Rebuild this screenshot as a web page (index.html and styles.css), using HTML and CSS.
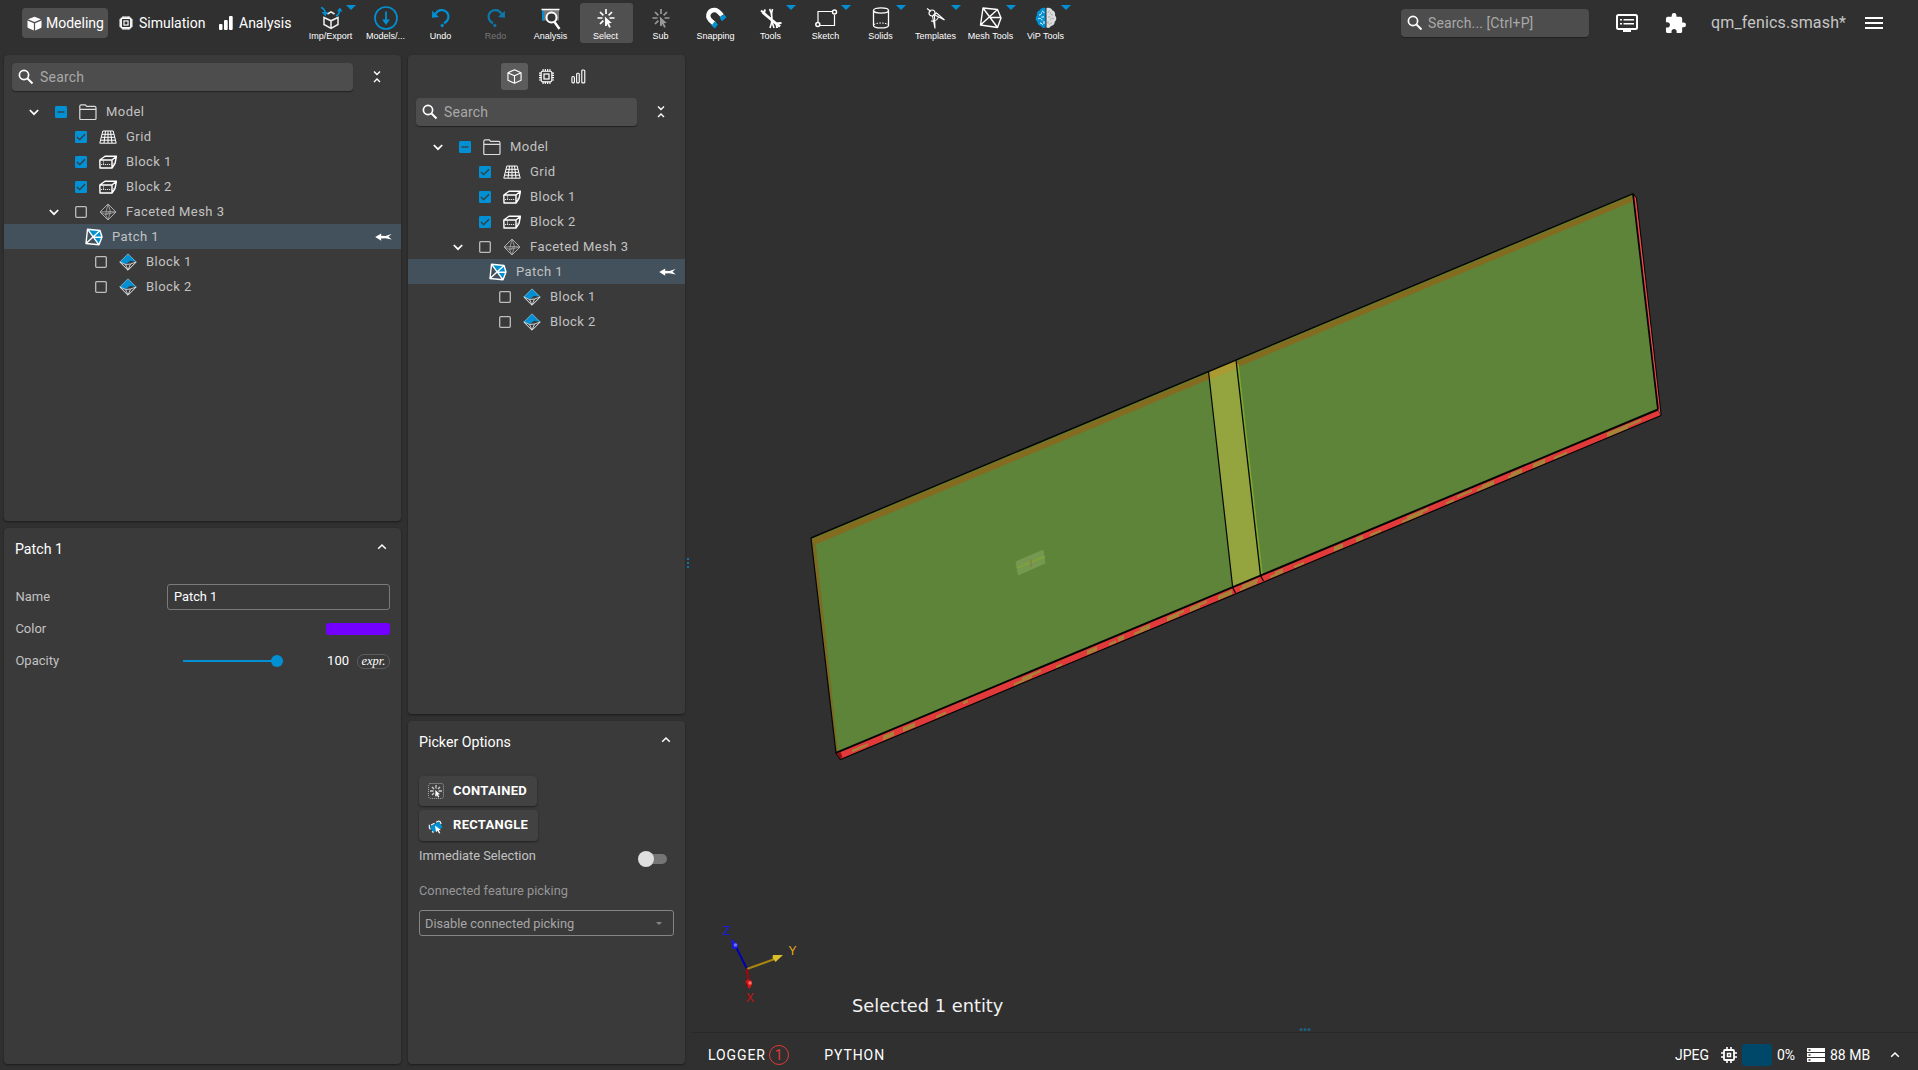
FILE: index.html
```html
<!DOCTYPE html>
<html lang="en">
<head>
<meta charset="utf-8">
<title>qm_fenics.smash*</title>
<link rel="stylesheet" href="styles.css">
</head>
<body>
<svg class="defs" aria-hidden="true">
  <symbol id="i-cube-solid" viewBox="0 0 24 24"><path d="M11 1.400 1.600 5 11 9.200c.6.3 1.400.3 2 0L22.400 5 13 1.400c-.6-.3-1.400-.3-2 0zM.8 7v10.500c0 .7.3 1.200 1 1.600L11 23.300V11.400zM23.200 7v10.500c0 .7-.3 1.200-1 1.600L13 23.300V11.400z" fill="#fff"/></symbol>
  <symbol id="i-chip" viewBox="0 0 24 24"><g fill="none" stroke="#fff"><rect x="3.500" y="3.500" width="17" height="17" rx="2.500" stroke-width="3"/><rect x="8.500" y="8.500" width="7" height="7" stroke-width="2"/><path d="M7 0v4m3.400-4v4m3.400-4v4M17 0v4M7 20v4m3.400-4v4m3.400-4v4M17 20v4M0 7h4m-4 3.400h4m-4 3.400h4M0 17h4M20 7h4m-4 3.400h4m-4 3.400h4M20 17h4" stroke-width="1.800"/></g></symbol>
  <symbol id="i-chip-line" viewBox="0 0 24 24"><g fill="none" stroke="#fff"><rect x="3.500" y="3.500" width="17" height="17" rx="2.500" stroke-width="1.800"/><rect x="8" y="8" width="8" height="8" stroke-width="2"/><path d="M6.500 0v3.500m3.600-3.500v3.500m3.700-3.500v3.500M17.500 0v3.500M6.500 20.500V24m3.600-3.500V24m3.700-3.500V24m3.700-3.500V24M0 6.500h3.500M0 10.100h3.500M0 13.800h3.500M0 17.500h3.500M20.500 6.500H24m-3.500 3.600H24m-3.500 3.700H24m-3.500 3.700H24" stroke-width="1.800"/></g></symbol>
  <symbol id="i-bars" viewBox="0 0 14 14"><g fill="#fff"><rect x="0" y="8" width="3.500" height="6" rx="1"/><rect x="5" y="4" width="3.700" height="10" rx="1"/><rect x="10" y="0" width="3.700" height="14" rx="1"/></g></symbol>
  <symbol id="i-bars-line" viewBox="0 0 16 16"><g fill="none" stroke="#fff" stroke-width="1.200"><rect x="1" y="8" width="2.600" height="6.800" rx="1"/><rect x="6" y="4.500" width="2.800" height="10.300" rx="1"/><rect x="11.500" y="1" width="3.200" height="13.800" rx="1"/></g></symbol>
  <symbol id="i-cube-line" viewBox="0 0 16 16"><path d="M8 .8 15 4v8L8 15.300 1 12V4zM1 4l7 3.300L15 4M8 7.300v8" fill="none" stroke="#fff" stroke-width="1.200" stroke-linejoin="round"/></symbol>
  <symbol id="i-search" viewBox="0 0 16 16"><g fill="none" stroke="#fff" stroke-width="1.700"><circle cx="6" cy="6" r="4.600"/><path d="m9.500 9.500 5 5" stroke-width="2"/></g></symbol>
  <symbol id="i-collapse" viewBox="0 0 8 14"><path d="m1 1.500 3 3 3-3M1 12l3-3 3 3" fill="none" stroke="#fff" stroke-width="1.400"/></symbol>
  <symbol id="i-down" viewBox="0 0 10 10"><path d="m.8 3 4.200 4.200L9.200 3" fill="none" stroke="#fff" stroke-width="1.700"/></symbol>
  <symbol id="i-up" viewBox="0 0 10 10"><path d="m1.200 6.800 3.800-3.800 3.800 3.800" fill="none" stroke="#fff" stroke-width="1.500"/></symbol>
  <symbol id="i-partial" viewBox="0 0 12 12"><rect width="12" height="12" rx="1.300" fill="#0090d3"/><path d="M2.500 6h7" stroke="#3a3a3a" stroke-width="1.300"/></symbol>
  <symbol id="i-checked" viewBox="0 0 12 12"><rect width="12" height="12" rx="1.300" fill="#0090d3"/><path d="m2 6 2.700 2.700L10 3.300" fill="none" stroke="#3a3a3a" stroke-width="1.300"/></symbol>
  <symbol id="i-unchecked" viewBox="0 0 12 12"><rect x=".7" y=".7" width="10.600" height="10.600" rx="1" fill="none" stroke="#bdbdbd" stroke-width="1.300"/></symbol>
  <symbol id="i-folder" viewBox="0 0 18 18"><path d="M.8 15.500V3.300c0-1 .5-1.500 1.500-1.500h4l1.400 1.500H15.500c1 0 1.500.5 1.500 1.500v10.700c0 .6-.4 1-1 1H1.800c-.6 0-1-.4-1-1zM.8 6.300H17" fill="none" stroke="#ddd" stroke-width="1.200"/></symbol>
  <symbol id="i-grid" viewBox="0 0 18 18"><path d="M3.800 3h10.400l3 12.200H.8zM3 6.300h12M2.200 9.300h13.600M1.400 12.200h15.200M6.500 3 5 15M9 3v12M11.500 3 13 15" fill="none" stroke="#fff" stroke-width="1"/></symbol>
  <symbol id="i-block" viewBox="0 0 18 18"><path d="M.8 7 6 3.300h11.500L16 10.500 13 15H1zM.8 7H13v8M13 7l4.500-3.700" fill="none" stroke="#fff" stroke-width="1.400" stroke-linejoin="round"/><path d="M2 11.500h10.500M4.500 7.500v4M13.500 11l2.500-1" fill="none" stroke="#ddd" stroke-width="1" stroke-dasharray="1.200 .8"/></symbol>
  <symbol id="i-mesh" viewBox="0 0 18 18"><path d="M9 1 17 9 9 17 1 9z" fill="none" stroke="#bbb" stroke-width=".9"/><path d="M9 1 6.500 11.500 9 17 11.500 8.500zM1 9l5.500 2.500L17 9M1 9l10.500-.5L17 9M6.500 11.500l5-3" fill="none" stroke="#aaa" stroke-width=".8"/></symbol>
  <symbol id="i-mesh-blue" viewBox="0 0 18 18"><path d="M9 .8 17.200 9l-6-1.200-4.500 3.500L.8 9z" fill="#0090d3"/><path d="M9 .8 17.200 9 9 17.200.8 9z" fill="none" stroke="#9ec4d4" stroke-width=".7"/><path d="m.8 9 5.700 2.500L9 17l2.500-6L17.200 9M.8 9 9 17.200 17.200 9M6.500 11.500l5-.5" fill="none" stroke="#ddd" stroke-width=".9"/></symbol>
  <symbol id="i-patch" viewBox="0 0 18 18"><path d="M2.500 1.200 15 2.500 8.500 9.500zM15 2.500 17 9l-3 7.500-5.500-7z" fill="#0090d3"/><path d="M2.500 1.200 15 2.500 17 9l-3 7.800L1 15.500zM2.500 1.200 14 16.800M15 2.500 1 15.500M8.500 9.300H17" fill="none" stroke="#fff" stroke-width="1.400" stroke-linejoin="round"/></symbol>
  <symbol id="i-pin" viewBox="0 0 17 10"><path d="M.2 5 6.300 1.500 6 3.700l4.500.2L16.500 2 13.500 4.800l3.300 2.700-6.500-1.200-4.300.2.300 2.300z" fill="#fff"/></symbol>
  <symbol id="i-impexp" viewBox="0 0 24 24"><path d="M8.500 8 12 5.800 15.500 8M5 11.500v7l7 4 7-4v-7l-7 3.300zM12 14.800v7.700" fill="none" stroke="#eee" stroke-width="1.500"/><path d="M2 1.500c3 .8 4 2.500 4.300 5.500M17 10c2.500-1 3.500-3 3.500-6" fill="none" stroke="#0090d3" stroke-width="1.700"/><path d="M2.500 6h6.300L6.500 10.300zM18 5.300l3-3.800 2.500 4z" fill="#0090d3"/></symbol>
  <symbol id="i-models" viewBox="0 0 24 24"><circle cx="12" cy="12" r="11" fill="none" stroke="#0090d3" stroke-width="1.700"/><path d="M11.100 5.500h1.800v8h3L12 19l-3.900-5.500h3z" fill="#0090d3"/></symbol>
  <symbol id="i-undo" viewBox="0 0 24 24"><path d="M6.500 8C9 3.500 14 3.200 17 5.500c4 3.500 2.800 9.500-2 11.800" fill="none" stroke="#0090d3" stroke-width="2.200"/><path d="m3.200 4.700-.2 7 7-.7zM13.200 17.500l2 2-2 2-2-2z" fill="#0090d3"/></symbol>
  <symbol id="i-analysis" viewBox="0 0 24 24"><path d="M3 3.500h17v11H3z" fill="#777"/><path d="M3 4.500h2v10H3z" fill="#0090d3"/><path d="M2.500 3.500h18" stroke="#fff" stroke-width="1.500"/><circle cx="12.500" cy="11.500" r="5" fill="#333" stroke="#fff" stroke-width="2"/><path d="m15.500 16 5 7" stroke="#fff" stroke-width="2.400"/></symbol>
  <symbol id="i-select" viewBox="0 0 24 24"><path d="M12 3v5M12 16v4M3.500 12h5M15.500 12h5M6 6l3.400 3.400M18 6l-3.400 3.400M6 18l3.400-3.400" stroke="currentColor" stroke-width="1.700"/><path d="m10.800 10.500 7 6.500-3 .2 2 3.800-1.700.8-1.800-3.800-2 2z" fill="currentColor"/></symbol>
  <symbol id="i-snap" viewBox="0 0 24 24"><path d="M10.500 18 6.500 14.500C1.500 9 6 3.700 11 4c3 .3 5 3 7 5.500" fill="none" stroke="#fff" stroke-width="4.400"/><path d="m10.500 15.500 3.500 2.800L11 22.500 7.500 19.800zM17.500 9.500l3-.7 2 2.400-4.500 4-2.200-3z" fill="#0090d3"/></symbol>
  <symbol id="i-tools" viewBox="0 0 24 24"><path d="m3.500 6 4.500 4L17 17.500l4 3" stroke="#fff" stroke-width="2.800"/><path d="M2 4.500 5 7l1-3.500M18 22l-.5-4.500 5-.5" fill="none" stroke="#fff" stroke-width="2"/><path d="M10.500 3c3 5 3.500 11 .5 19M13.500 3c-2 5-.5 14 1.500 19" fill="none" stroke="#fff" stroke-width="1.600"/></symbol>
  <symbol id="i-sketch" viewBox="0 0 24 24"><path d="M4 16.500V5.500h14M20.500 9v10.500H6" fill="none" stroke="#fff" stroke-width="1.200"/><circle cx="20.500" cy="6" r="2" fill="none" stroke="#fff" stroke-width="1.500"/><circle cx="3.800" cy="18.500" r="2" fill="none" stroke="#fff" stroke-width="1.500"/></symbol>
  <symbol id="i-solid" viewBox="0 0 24 24"><path d="M4.500 4.500v15c0 3.300 15 3.300 15 0v-15" fill="none" stroke="#fff" stroke-width="1.300"/><ellipse cx="12" cy="4.500" rx="7.500" ry="2.600" fill="none" stroke="#fff" stroke-width="1.300"/><path d="M5 18.500c3-2 11-2 14 0" fill="none" stroke="#fff" stroke-dasharray="1.500 1.300"/></symbol>
  <symbol id="i-templates" viewBox="0 0 24 24"><circle cx="8" cy="7" r="3" fill="none" stroke="#fff" stroke-width="1.200"/><path d="m3 2.500 4 3M10 8.500l10.500 5.500-8-7zM8.500 10l2.500 12.500L10.500 10M14.500 10.500C14 13.500 11 15.500 7 15" fill="none" stroke="#fff" stroke-width="1.100"/></symbol>
  <symbol id="i-meshtools" viewBox="0 0 24 24"><path d="m4 2 14.500 1.500L22 12l-3.500 9.500L1.500 19zM4 2l14.500 19.500M18.500 3.500 1.500 19M11 11.500h11" fill="none" stroke="#fff" stroke-width="1.400" stroke-linejoin="round"/></symbol>
  <symbol id="i-brain" viewBox="0 0 24 24"><path d="M11.500 2C8 1 6 3 5.500 4.500 3 5 2.500 8 3 9.500c-2 2-1.500 5 .3 6.200 0 2.500 1.700 4 3.700 4.300C8 22 10 22.500 11.500 21.500z" fill="#0090d3"/><path d="M12.500 2c3.500-1 5.500 1 6 2.500 2.500.5 3 3.500 2.500 5 2 2 1.500 5-.3 6.200 0 2.500-1.700 4-3.700 4.300-1 2-3 2.500-4.500 1.500z" fill="#ddd"/><path d="M5 9c2 0 2.500-1 2.500-2.500M8 5c1 0 2 1 2 2M4 13c2-1.500 4 0 4 1.500M7.500 11H10M6 17c1.500 0 2.500 1 2.500 2M10 15v3" stroke="#fff" fill="none"/><path d="M19 9c-2 0-2.500-1-2.500-2.500M16 5c-1 0-2 1-2 2M20 13c-2-1.500-4 0-4 1.500M16.500 11H14M18 17c-1.500 0-2.500 1-2.500 2M14 15v3" stroke="#aaa" fill="none"/></symbol>
</svg>

<header class="topbar">
  <nav class="modes">
    <div class="mode mode-modeling active"><svg width="15" height="15"><use href="#i-cube-solid"/></svg><span>Modeling</span></div>
    <div class="mode mode-simulation"><svg width="14" height="14"><use href="#i-chip"/></svg><span>Simulation</span></div>
    <div class="mode"><svg width="14" height="14"><use href="#i-bars"/></svg><span>Analysis</span></div>
  </nav>
  <div class="tools">
    <div class="tool has-menu"><svg><use href="#i-impexp"/></svg><span>Imp/Export</span></div>
    <div class="tool"><svg><use href="#i-models"/></svg><span>Models/...</span></div>
    <div class="tool"><svg><use href="#i-undo"/></svg><span>Undo</span></div>
    <div class="tool disabled"><svg class="flip"><use href="#i-undo"/></svg><span>Redo</span></div>
    <div class="tool"><svg><use href="#i-analysis"/></svg><span>Analysis</span></div>
    <div class="tool active"><svg><use href="#i-select"/></svg><span>Select</span></div>
    <div class="tool"><svg class="dim"><use href="#i-select"/></svg><span>Sub</span></div>
    <div class="tool"><svg><use href="#i-snap"/></svg><span>Snapping</span></div>
    <div class="tool has-menu"><svg><use href="#i-tools"/></svg><span>Tools</span></div>
    <div class="tool has-menu"><svg><use href="#i-sketch"/></svg><span>Sketch</span></div>
    <div class="tool has-menu"><svg><use href="#i-solid"/></svg><span>Solids</span></div>
    <div class="tool has-menu"><svg><use href="#i-templates"/></svg><span>Templates</span></div>
    <div class="tool has-menu"><svg><use href="#i-meshtools"/></svg><span>Mesh Tools</span></div>
    <div class="tool has-menu"><svg><use href="#i-brain"/></svg><span>ViP Tools</span></div>
  </div>
  <div class="top-right">
    <div class="search search-top"><svg><use href="#i-search"/></svg><span>Search... [Ctrl+P]</span></div>
    <svg class="messages" width="22" height="18" viewBox="0 0 22 18"><rect x="1" y="1" width="20" height="14" rx="1.500" fill="none" stroke="#fff" stroke-width="2"/><path d="M7 16h8v2H7zM4 5h2v1.600H4zM4 9h2v1.600H4zM7.500 5H18v1.600H7.500zM7.500 9H18v1.600H7.500z" fill="#fff"/></svg>
    <svg class="plugins" width="21" height="21" viewBox="1 1 22 22"><path d="M20.500 11H19V7a2 2 0 0 0-2-2h-4V3.500a2.500 2.500 0 0 0-5 0V5H4a2 2 0 0 0-2 2v3.800h1.500c1.500 0 2.700 1.200 2.700 2.700S5 16.200 3.500 16.200H2V20a2 2 0 0 0 2 2h3.800v-1.500c0-1.500 1.200-2.700 2.700-2.700s2.700 1.200 2.700 2.700V22H17a2 2 0 0 0 2-2v-4h1.500a2.500 2.500 0 0 0 0-5z" fill="#fff"/></svg>
    <span class="file-name">qm_fenics.smash*</span>
    <svg class="menu" width="18" height="12" viewBox="0 0 18 12"><path d="M0 1h18M0 6h18M0 11h18" stroke="#fff" stroke-width="2"/></svg>
  </div>
</header>

<main class="workspace">
  <section class="column column-left">
    <div class="panel tree-panel">
      <div class="search-row">
        <div class="search"><svg><use href="#i-search"/></svg><span>Search</span></div>
        <svg class="collapse" width="8" height="14"><use href="#i-collapse"/></svg>
      </div>
      <ul class="tree">
        <li class="l0"><svg class="arrow"><use href="#i-down"/></svg><svg class="check"><use href="#i-partial"/></svg><svg class="kind"><use href="#i-folder"/></svg><span>Model</span></li>
        <li class="l1 leaf"><svg class="check"><use href="#i-checked"/></svg><svg class="kind"><use href="#i-grid"/></svg><span>Grid</span></li>
        <li class="l1 leaf"><svg class="check"><use href="#i-checked"/></svg><svg class="kind"><use href="#i-block"/></svg><span>Block 1</span></li>
        <li class="l1 leaf"><svg class="check"><use href="#i-checked"/></svg><svg class="kind"><use href="#i-block"/></svg><span>Block 2</span></li>
        <li class="l1"><svg class="arrow"><use href="#i-down"/></svg><svg class="check"><use href="#i-unchecked"/></svg><svg class="kind"><use href="#i-mesh"/></svg><span>Faceted Mesh 3</span></li>
        <li class="patch selected"><svg class="kind"><use href="#i-patch"/></svg><span>Patch 1</span><svg class="pin"><use href="#i-pin"/></svg></li>
        <li class="l2 leaf"><svg class="check"><use href="#i-unchecked"/></svg><svg class="kind"><use href="#i-mesh-blue"/></svg><span>Block 1</span></li>
        <li class="l2 leaf"><svg class="check"><use href="#i-unchecked"/></svg><svg class="kind"><use href="#i-mesh-blue"/></svg><span>Block 2</span></li>
      </ul>
    </div>
    <div class="panel props">
      <div class="panel-title"><h2>Patch 1</h2><svg width="10" height="10"><use href="#i-up"/></svg></div>
      <div class="field"><label>Name</label><div class="text-input">Patch 1</div></div>
      <div class="field"><label>Color</label><div class="swatch"></div></div>
      <div class="field"><label>Opacity</label>
        <div class="slider"><i></i></div><span class="value">100</span><span class="expr">expr.</span></div>
    </div>
  </section>

  <section class="column column-mid">
    <div class="panel tree-panel picker-tree">
      <div class="tabs">
        <div class="tab active"><svg><use href="#i-cube-line"/></svg></div>
        <div class="tab"><svg><use href="#i-chip-line"/></svg></div>
        <div class="tab"><svg><use href="#i-bars-line"/></svg></div>
      </div>
      <div class="search-row">
        <div class="search"><svg><use href="#i-search"/></svg><span>Search</span></div>
        <svg class="collapse" width="8" height="14"><use href="#i-collapse"/></svg>
      </div>
      <ul class="tree">
        <li class="l0"><svg class="arrow"><use href="#i-down"/></svg><svg class="check"><use href="#i-partial"/></svg><svg class="kind"><use href="#i-folder"/></svg><span>Model</span></li>
        <li class="l1 leaf"><svg class="check"><use href="#i-checked"/></svg><svg class="kind"><use href="#i-grid"/></svg><span>Grid</span></li>
        <li class="l1 leaf"><svg class="check"><use href="#i-checked"/></svg><svg class="kind"><use href="#i-block"/></svg><span>Block 1</span></li>
        <li class="l1 leaf"><svg class="check"><use href="#i-checked"/></svg><svg class="kind"><use href="#i-block"/></svg><span>Block 2</span></li>
        <li class="l1"><svg class="arrow"><use href="#i-down"/></svg><svg class="check"><use href="#i-unchecked"/></svg><svg class="kind"><use href="#i-mesh"/></svg><span>Faceted Mesh 3</span></li>
        <li class="patch selected"><svg class="kind"><use href="#i-patch"/></svg><span>Patch 1</span><svg class="pin"><use href="#i-pin"/></svg></li>
        <li class="l2 leaf"><svg class="check"><use href="#i-unchecked"/></svg><svg class="kind"><use href="#i-mesh-blue"/></svg><span>Block 1</span></li>
        <li class="l2 leaf"><svg class="check"><use href="#i-unchecked"/></svg><svg class="kind"><use href="#i-mesh-blue"/></svg><span>Block 2</span></li>
      </ul>
    </div>
    <div class="panel props">
      <div class="panel-title"><h2>Picker Options</h2><svg width="10" height="10"><use href="#i-up"/></svg></div>
      <div class="buttons">
        <div class="btn"><svg width="16" height="16" viewBox="0 0 16 16"><rect x=".5" y=".5" width="15" height="15" rx="2" fill="none" stroke="#aaa" stroke-dasharray="1 1"/><path d="M8 2v3.500M2 8h3.500M10.500 8H14M4 4l2 2M12 4l-2 2M4 12l2-2M8 11v2.500" stroke="#ccc" stroke-width="1.300"/><path d="m7.300 7 4.700 4.300-2 .2 1.300 2.500-1.200.5-1.200-2.500-1.300 1.300z" fill="#fff"/></svg>CONTAINED</div>
        <div class="btn btn-rect"><svg width="16" height="16" viewBox="0 0 16 16"><path d="M2 8.500 11.500 3.500 14.500 9.500 5 14.500z" fill="#0090d3"/><path d="M1.300 6.800v3l1.200 1.500M4 13.500l1.500 1M3 7l3.500-1.700M8 4.300 10.500 3l1.500.5 1.200 2.500" fill="none" stroke="#fff" stroke-width="1.100"/><path d="m7 7.500 6 4.500-2.300.2 1.600 2.800-1.200.6-1.600-2.800-1.500 1.400z" fill="#fff"/></svg>RECTANGLE</div>
      </div>
      <div class="toggle-row"><span>Immediate Selection</span><div class="toggle"><i></i></div></div>
      <div class="picking-label">Connected feature picking</div>
      <div class="select-box"><span>Disable connected picking</span><i></i></div>
    </div>
  </section>

  <div class="splitter"><i></i><i></i><i></i></div>

  <section class="view">
    <svg class="scene" width="1228" height="977" viewBox="690 55 1228 977">
      <polygon points="811,538 1633,194 1657.500,409.500 836,752.500" fill="#5d8438"/>
      <polygon points="811,538 1633,194 1632.500,201.500 815,544.500 837.500,749 836,752.500" fill="#846b20"/>
      <polygon points="813,541.500 816,545 838,751 836.500,751" fill="#7a6c24"/>
      <path d="M812 539 1633 195.300" stroke="#6b7a2a" stroke-width="1.500"/>
      <polygon points="1208.500,371.500 1236,360 1260.500,575.500 1232.700,587" fill="#94a540"/>
      <polygon points="1208.500,371.500 1236,360 1236.800,368 1209.300,380" fill="#ab9932"/>
      <path d="M1238 364 1262 574" stroke="#80a92c" stroke-width="1.400"/>
      <polygon points="836,753 1657.500,410 1661,415.500 840.500,759.500" fill="#e03a3a"/>
      <!-- overlapping faces showing through along the bottom edge -->
      <g transform="skewY(-22.710)" stroke="#a9823a">
        <path stroke-width="4.600" d="M883 1107.700H894M903 1107.700H915M1022 1107.700H1032M1087 1107.700H1097M1118 1107.700H1124M1140 1107.700H1150M1167 1107.700H1179M1190 1107.700H1200M1218 1107.700H1232M1275 1107.700H1283M1334 1107.700H1343M1356 1107.700H1363M1407 1107.700H1423M1482 1107.700H1494M1511 1107.700H1522M1533 1107.700H1545M1607 1107.700H1628"/>
        <path stroke-width="2.600" d="M852 1107.700H868M936 1108.700H946M963 1106.200H968M1014 1109H1024M1030 1106.500H1041M1056 1109H1062M1109 1108.700H1116M1134 1108.700H1142M1176 1106.500H1184M1198 1106.500H1207M1240 1108.700H1257M1242 1106.200H1258M1270 1108.700H1278M1294 1108.700H1304M1370 1108.700H1381M1402 1108.700H1410M1420 1106.500H1428M1446 1108.700H1454M1457 1106.500H1472M1477 1108.700H1486M1508 1108.700H1514M1554 1108.700H1567M1625 1106.800H1641"/>
      </g>
      <polygon points="1633,194 1636.300,198 1661,414 1657.500,409.500" fill="#f04848"/>
      <g fill="none" stroke="#050505">
        <path d="M811 538 1632.700 193.800" stroke-width="1.400"/>
        <path d="M811 538 836 753 840.500 759.500 1661 415.500" stroke-width="1.200"/>
        <path d="M836 752.800 1658 409.500" stroke-width="2"/>
        <path d="M1633 193.500 1658 409.500" stroke-width="1.800"/>
        <path d="M1633 193.500 1636.500 198 1661 413.500v2.500" stroke-width="1"/>
        <path d="M1208.500 371.500 1232.700 587.500 1235.500 593M1236 360 1260.500 575.500 1263.500 581" stroke-width="1.200"/>
      </g>
      <path d="m836.500 753.500 4 5.500 2-2-2-5z" fill="#8e1015"/>
      <polygon points="1015.500,561.500 1043.500,549.500 1045.500,563.500 1018,575.500" fill="#74984f"/>
      <path d="m1017 568 28-11.500" stroke="#87a82c" stroke-width="1.200"/><path d="m1030.500 559 .8 8" stroke="#84804a" stroke-width="1.500"/>
      <g class="axes">
        <path d="M747 969 735 945" stroke="#0000b0" stroke-width="2"/><path d="m731 938.500 7 6.500-1 3.500-4.500.8z" fill="#1a1ae0"/><circle cx="735.500" cy="945" r="1.800" fill="#7070ff"/>
        <path d="m747 969 29-10.500" stroke="#a8860e" stroke-width="2"/><path d="m783 955-10 0-.5 2.700 3 4.300z" fill="#d9c02a"/>
        <path d="m747 969 1.700 14" stroke="#b00000" stroke-width="2"/><path d="m745.500 981 3-1.500 3.500 1.500.3 3.500-3 4.500-3.500-4z" fill="#d01818"/><circle cx="750" cy="983" r="1.700" fill="#ff7070"/><path d="m745.500 981 1 5 1.500 1z" fill="#400"/>
        <text x="723" y="935" fill="#1a1ae0">Z</text><text x="788.500" y="955" fill="#e8ac18">Y</text><text x="746" y="1002" fill="#cc1010">X</text>
      </g>
      <text x="852" y="1012" class="status">Selected 1 entity</text>
      <g fill="#1a627e"><circle cx="1301" cy="1029.500" r="1.500"/><circle cx="1305" cy="1029.500" r="1.500"/><circle cx="1309" cy="1029.500" r="1.500"/></g>
    </svg>
    <footer class="bottombar">
      <span class="log-tab">LOGGER</span><span class="badge">1</span><span class="log-tab python">PYTHON</span>
      <div class="stats">
        <span>JPEG</span>
        <svg class="cpu" width="16" height="16" viewBox="0 0 16 16"><g fill="none" stroke="#fff"><rect x="3" y="3" width="10" height="10" rx="1" stroke-width="1.800"/><rect x="6.500" y="6.500" width="3" height="3" stroke-width="1.500"/><path d="M6 0v3m4-3v3M6 13v3m4-3v3M0 6h3m-3 4h3M13 6h3m-3 4h3" stroke-width="1.600"/></g></svg>
        <i class="cpu-meter"></i>
        <span class="cpu-value">0%</span>
        <svg class="memory" width="18" height="14" viewBox="0 0 18 14"><path d="M0 0h18v4H0zM0 5h18v4H0zM0 10h18v4H0z" fill="#fff"/><path d="M1.500 2h2M1.500 7h2M1.500 12h2" stroke="#303030" stroke-width="1.400"/></svg>
        <span class="mem-value">88 MB</span>
        <svg width="10" height="10"><use href="#i-up"/></svg>
      </div>
    </footer>
  </section>
</main>
</body>
</html>
```
FILE: styles.css
```css
* { box-sizing: border-box; }

body {
  margin: 0;
  width: 1918px;
  height: 1070px;
  overflow: hidden;
  display: flex;
  flex-direction: column;
  background: #303030;
  color: #fff;
  font: 13px/16px Roboto, sans-serif;
}

svg { display: block; flex: none; }
.defs { display: none; }

/* Top bar */
.topbar { height: 55px; display: flex; align-items: flex-start; }
.modes { display: flex; gap: 5px; width: 282.500px; margin: 8px 0 0 22px; font-size: 14px; }
.mode { display: flex; align-items: center; gap: 6px; height: 30px; padding-left: 6px; border-radius: 4px; }
.mode span { margin-top: -1px; }
.mode-modeling { width: 86px; gap: 4px; padding-left: 5px; }
.mode-simulation { width: 95px; }
.mode.active { background: #505050; }

.tools { display: flex; gap: 2px; margin-top: 3px; }
.tool {
  position: relative;
  width: 53px;
  height: 40px;
  padding: 3px 1px 0 0;
  display: flex;
  flex-direction: column;
  align-items: center;
  gap: 1px;
  border-radius: 3px;
  font: 9px/11px "Liberation Sans", sans-serif;
  white-space: nowrap;
}
.tool svg { width: 24px; height: 24px; }
.tool.active { background: #505050; }
.tool.disabled span { color: #777; }
.tool.disabled svg { opacity: .75; }
.tool .flip { transform: scaleX(-1); }
.tool .dim { color: #999; }
.tool.has-menu::after {
  content: "";
  position: absolute;
  top: 2px;
  right: 2px;
  border: 5px solid transparent;
  border-top-color: #0090d3;
  border-bottom: 0;
}

.top-right { display: flex; align-items: center; margin: 9px 35px 0 auto; height: 28px; }
.messages { margin-left: 27px; }
.plugins { margin-left: 27px; }
.file-name { margin-left: 25px; width: 154px; color: #c6c6c6; font-size: 16px; letter-spacing: .15px; }

.search {
  display: flex;
  align-items: center;
  gap: 6px;
  height: 28px;
  padding-left: 6px;
  border-radius: 4px;
  background: #4d4d4d;
  box-shadow: 0 1px 1px #222;
  color: #a9a9a9;
  font-size: 14px;
  letter-spacing: .2px;
}
.search svg { width: 16px; height: 16px; }
.search-top { width: 188px; letter-spacing: .1px; gap: 5px; }

/* Panels */
.workspace { flex: 1; display: flex; min-height: 0; }
.column { display: flex; flex-direction: column; gap: 7px; padding-bottom: 6px; }
.column-left { width: 397px; margin-left: 4px; }
.column-mid { width: 277px; margin-left: 7px; }
.panel { background: #3a3a3a; border-radius: 4px; box-shadow: 0 1px 2px #1c1c1c; }
.tree-panel { height: 466px; padding-top: 8px; }
.picker-tree { height: 659px; }
.props { flex: 1; }

.search-row { display: flex; align-items: center; justify-content: space-between; padding: 0 20px 0 8px; }
.search-row .search { width: 341px; }
.picker-tree .search { width: 221px; }

.tabs { display: flex; justify-content: center; gap: 5px; margin-bottom: 8px; }
.tab { width: 27px; height: 27px; display: grid; place-items: center; border-radius: 3px; }
.tab svg { width: 15px; height: 15px; }
.tab.active { background: #5c5c5c; }

.tree { list-style: none; margin: 8px 0 0; padding: 0; color: #c2c2c2; letter-spacing: .45px; }
.tree li { display: flex; align-items: center; height: 25px; padding-right: 9px; }
.arrow { width: 10px; height: 10px; margin-right: 16px; }
.check { width: 12px; height: 12px; margin-right: 12px; }
.kind { width: 18px; height: 18px; margin-right: 9px; }
.pin { width: 17px; height: 10px; margin-left: auto; }
.l0 { padding-left: 25px; }
.l1 { padding-left: 45px; }
.l1.leaf { padding-left: 71px; }
.l2.leaf { padding-left: 91px; }
.patch { padding-left: 81px; }
.selected { background: #42515b; }

.panel-title { display: flex; justify-content: space-between; padding: 12px 14px 0 11px; }
.panel-title h2 { margin: 0; font-size: 14.200px; font-weight: 400; line-height: 18px; }
.panel-title svg { margin-top: 2px; }

.field { display: flex; align-items: center; height: 32px; padding: 0 11px; }
.panel-title + .field { margin-top: 23px; }
.field label { flex: 1; padding-left: .4px; color: #c2c2c2; }
.text-input { width: 223px; height: 26px; padding: 4px 6px; border: 1px solid #7a7a7a; border-radius: 3px; font-size: 12.800px; }
.swatch { width: 64px; height: 12px; border-radius: 3px; background: #7300ff; }
.slider { width: 100px; height: 2px; background: #0090d3; display: flex; align-items: center; justify-content: flex-end; }
.slider i { width: 12px; height: 12px; border-radius: 50%; background: #0090d3; }
.value { width: 66px; text-align: right; }
.expr {
  width: 33px;
  height: 15px;
  margin-left: 8px;
  border: 1px solid #5c5c5c;
  border-radius: 7px;
  font: italic 12.500px/12px "Liberation Serif", serif;
  text-align: center;
}

.buttons { display: flex; flex-direction: column; align-items: flex-start; gap: 4px; padding: 25px 11px 0; }
.btn {
  display: flex;
  align-items: center;
  gap: 9px;
  width: 118px;
  height: 30px;
  padding-left: 9px;
  border-radius: 4px;
  background: #424242;
  box-shadow: 0 1px 2px #202020;
  font-weight: 700;
  letter-spacing: .3px;
}
.btn-rect { width: 119px; height: 31px; padding-bottom: 1px; }
.btn-rect svg { margin-top: 2px; }
.toggle-row { display: flex; justify-content: space-between; height: 32px; padding: 7px 18px 0 11px; color: #c2c2c2; font-size: 12.800px; }
.toggle { display: flex; align-items: center; width: 21px; height: 10px; margin-top: 6px; border-radius: 5px; background: #757575; }
.toggle i { flex: none; width: 16px; height: 16px; margin-left: -8px; border-radius: 50%; background: #dfdfdf; }
.picking-label { padding: 10px 11px 0; color: #969696; font-size: 12.800px; }
.select-box {
  display: flex;
  align-items: center;
  justify-content: space-between;
  width: 255px;
  height: 26px;
  margin: 11px 11px 0;
  padding: 1px 11px 0 5px;
  border: 1px solid #858585;
  border-radius: 3px;
  color: #a6a6a6;
  font-size: 12.800px;
}
.select-box i { border: 3.500px solid transparent; border-top-color: #858585; border-bottom: 0; }

.splitter { width: 5px; display: flex; flex-direction: column; align-items: flex-end; gap: 2px; padding: 503px 1px 0 0; }
.splitter i { width: 2px; height: 2px; background: #0f74a3; }

/* 3D view */
.view { width: 1228px; display: flex; flex-direction: column; }
.axes text { font: 12px "Liberation Sans", sans-serif; }
.status { fill: #f2f2f2; font: 17.800px "DejaVu Sans", sans-serif; }

.bottombar {
  flex: 1;
  display: flex;
  align-items: center;
  padding: 6px 18px 0 18px;
  border-top: 1px solid #292929;
  font-size: 14px;
}
.log-tab { letter-spacing: .9px; }
.badge {
  width: 20px;
  height: 20px;
  margin-left: 3px;
  border: 1px solid #e53935;
  border-radius: 50%;
  color: #e53935;
  line-height: 19px;
  text-align: center;
}
.python { margin-left: 35.500px; }
.stats { display: flex; align-items: center; margin-left: auto; }
.cpu { margin-left: 12px; }
.cpu-meter { width: 30px; height: 22px; margin-left: 5px; border-radius: 3px; background: #00486a; }
.cpu-value { width: 28px; margin-left: 5px; }
.memory { margin-left: 2px; }
.mem-value { width: 60px; margin-left: 5px; }
```
